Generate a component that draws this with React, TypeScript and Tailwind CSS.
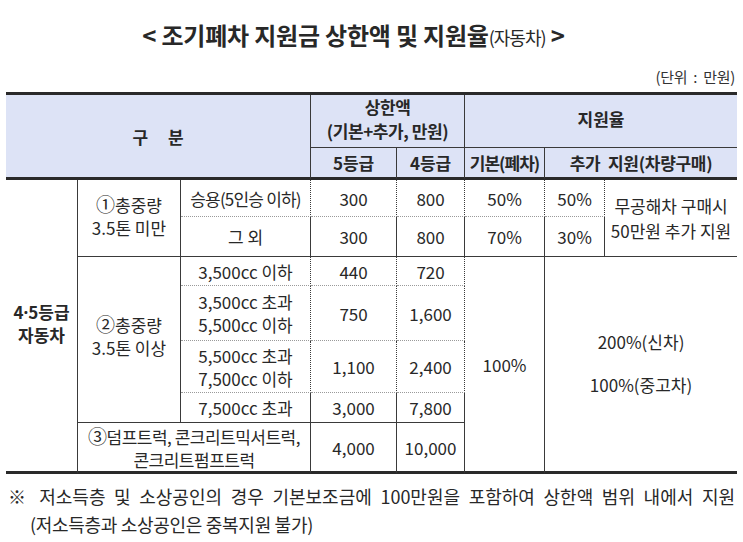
import React from 'react';

const line = 'border-[#3a3a3a]';
const dot = 'border-b border-dotted border-b-[#9a9a9a]';
const thick = 'border-b-[3px] border-b-[#2a2a2a]';

export default function App() {
  return (
    <div className="w-[743px] h-[542px] bg-white text-[#282828] font-['Noto_Sans_CJK_KR','Noto_Sans',sans-serif] overflow-hidden">
      {/* Title */}
      <div className="pt-[17px] h-[66px] pr-[36px] text-center">
        <span className="text-[24px] font-bold tracking-[-0.2px]">
          &lt; 조기폐차 지원금 상한액 및 지원율
          <span className="text-[18px] font-normal tracking-[-1px]">(자동차)</span> &gt;
        </span>
      </div>
      <div className="flex justify-end pr-[8px] h-[26px] text-[15px] leading-[22px] text-[#333] tracking-[-0.3px] [word-spacing:3px]">(단위 : 만원)</div>

      {/* Table */}
      <div className="px-[6px]">
        <table className="w-[731px] table-fixed border-separate border-spacing-0 text-[17px] leading-[23px] text-center border-t-[3px] border-t-[#2a2a2a]">
          <colgroup>
            <col className="w-[72px]" />
            <col className="w-[103px]" />
            <col className="w-[130px]" />
            <col className="w-[86px]" />
            <col className="w-[68px]" />
            <col className="w-[80px]" />
            <col className="w-[60px]" />
            <col className="w-[132px]" />
          </colgroup>
          <thead className="bg-[#dde3f6] font-bold">
            <tr className="h-[53px]">
              <th colSpan={3} rowSpan={2} className={`border-r ${line} ${thick} tracking-[8px] pl-[8px]`}>
                구 분
              </th>
              <th colSpan={2} className={`border-r border-b ${line} leading-[24px] tracking-[-0.4px] pb-[4px]`}>
                상한액
                <br />
                (기본+추가, 만원)
              </th>
              <th colSpan={3} className={`border-b ${line} pb-[6px]`}>지원율</th>
            </tr>
            <tr className="h-[32px]">
              <th className={`border-r ${line} ${thick}`}>5등급</th>
              <th className={`border-r ${line} ${thick}`}>4등급</th>
              <th className={`border-r ${line} ${thick} tracking-[-1px]`}>기본(폐차)</th>
              <th colSpan={2} className={`${thick} tracking-[-0.3px] [word-spacing:4px]`}>
                추가 지원(차량구매)
              </th>
            </tr>
          </thead>
          <tbody>
            <tr className="h-[37px]">
              <td rowSpan={7} className={`border-r ${line} ${thick} font-bold leading-[22px] pb-[4px]`}>
                4<span className="font-['Noto_Sans',sans-serif]">·</span>5등급
                <br />
                자동차
              </td>
              <td rowSpan={2} className={`border-r border-b ${line} pb-[6px]`}>
                <span className="text-[19px]">①</span>총중량
                <br />
                3.5톤 미만
              </td>
              <td className={`border-r ${line} ${dot} tracking-[-0.8px]`}>승용(5인승 이하)</td>
              <td className={`border-r ${line} ${dot}`}>300</td>
              <td className={`border-r ${line} ${dot}`}>800</td>
              <td className={`border-r ${line} ${dot}`}>50%</td>
              <td className={`border-r ${line} ${dot}`}>50%</td>
              <td rowSpan={2} className={`border-b ${line} leading-[25px]`}>
                무공해차 구매시
                <br />
                50만원 추가 지원
              </td>
            </tr>
            <tr className="h-[40px]">
              <td className={`border-r border-b ${line}`}>그 외</td>
              <td className={`border-r border-b ${line}`}>300</td>
              <td className={`border-r border-b ${line}`}>800</td>
              <td className={`border-r border-b ${line}`}>70%</td>
              <td className={`border-r border-b ${line}`}>30%</td>
            </tr>
            <tr className="h-[29px]">
              <td rowSpan={4} className={`border-r border-b ${line} pb-[8px]`}>
                <span className="text-[19px]">②</span>총중량
                <br />
                3.5톤 이상
              </td>
              <td className={`border-r ${line} ${dot}`}>3,500cc 이하</td>
              <td className={`border-r ${line} ${dot}`}>440</td>
              <td className={`border-r ${line} ${dot}`}>720</td>
              <td rowSpan={5} className={`border-r ${line} ${thick}`}>100%</td>
              <td rowSpan={5} colSpan={2} className={thick}>
                <div className="flex flex-col items-center gap-[20px] pb-[2px]">
                  <span>200%(신차)</span>
                  <span>100%(중고차)</span>
                </div>
              </td>
            </tr>
            <tr className="h-[55px]">
              <td className={`border-r ${line} ${dot}`}>
                3,500cc 초과
                <br />
                5,500cc 이하
              </td>
              <td className={`border-r ${line} ${dot}`}>750</td>
              <td className={`border-r ${line} ${dot}`}>1,600</td>
            </tr>
            <tr className="h-[52px]">
              <td className={`border-r ${line} ${dot}`}>
                5,500cc 초과
                <br />
                7,500cc 이하
              </td>
              <td className={`border-r ${line} ${dot}`}>1,100</td>
              <td className={`border-r ${line} ${dot}`}>2,400</td>
            </tr>
            <tr className="h-[30px]">
              <td className={`border-r border-b ${line}`}>7,500cc 초과</td>
              <td className={`border-r border-b ${line}`}>3,000</td>
              <td className={`border-r border-b ${line}`}>7,800</td>
            </tr>
            <tr className="h-[51px]">
              <td colSpan={2} className={`border-r ${line} ${thick} tracking-[-0.5px]`}>
                <span className="text-[19px]">③</span>덤프트럭, 콘크리트믹서트럭,
                <br />
                콘크리트펌프트럭
              </td>
              <td className={`border-r ${line} ${thick}`}>4,000</td>
              <td className={`border-r ${line} ${thick}`}>10,000</td>
            </tr>
          </tbody>
        </table>
      </div>

      {/* Note */}
      <div className="px-[8px] pt-[8px] text-[18px] leading-[28px] text-[#282828]">
        <div className="text-justify [text-align-last:justify]">
          ※ 저소득층 및 소상공인의 경우 기본보조금에 100만원을 포함하여 상한액 범위 내에서 지원
        </div>
        <div className="pl-[22px] tracking-[-0.3px]">(저소득층과 소상공인은 중복지원 불가)</div>
      </div>
    </div>
  );
}
